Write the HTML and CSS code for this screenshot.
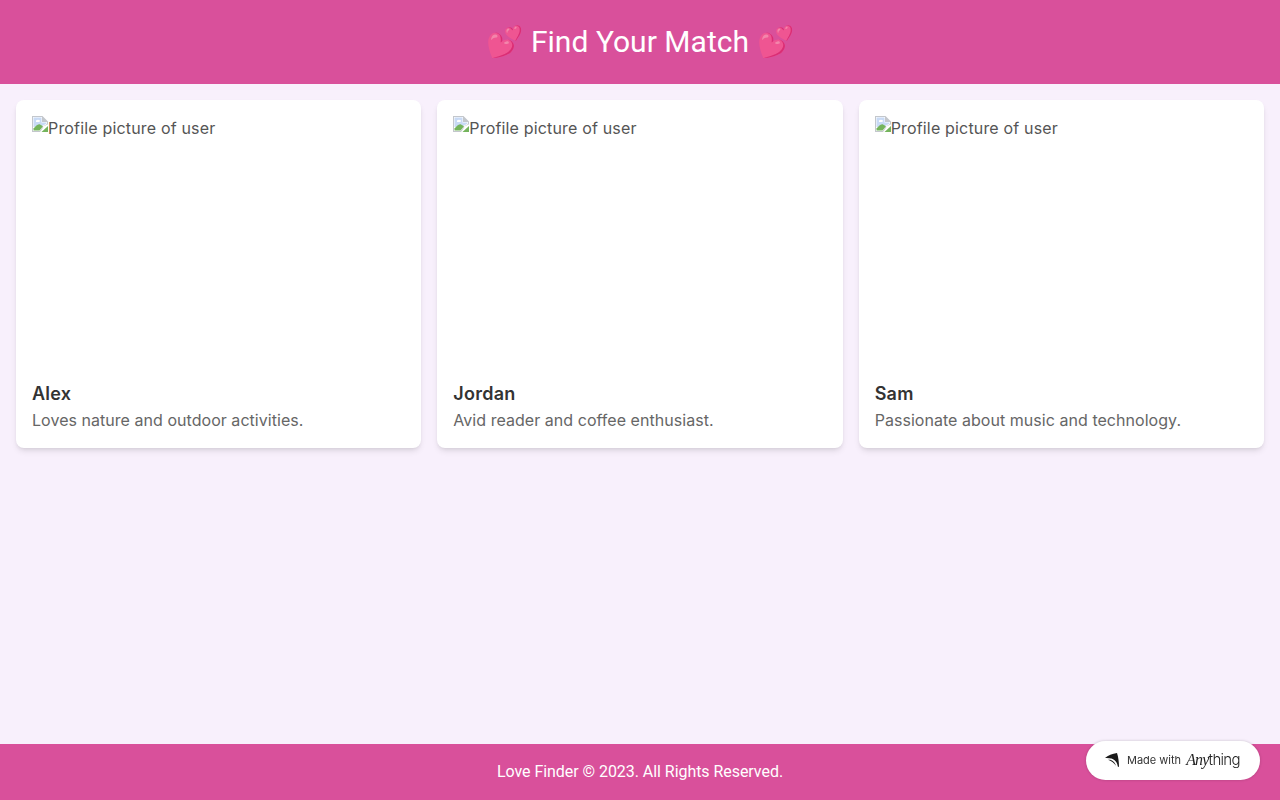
FILE: index.html
```html
<!DOCTYPE html>
<html lang="en">
<head>
<meta charset="utf-8">
<title>Love Finder</title>
<link rel="stylesheet" href="styles.css">
</head>
<body>
<div class="page">
  <header class="site-header"><h1>💕 Find Your Match 💕</h1></header>
  <main class="grid">
    <article class="card">
      <div class="photo"><svg class="broken" viewBox="0 0 16 16" width="16" height="16"><path d="M0 0H10.5L16 5.5V8.5L11.5 11 8 16H0Z" fill="#c3c7cc"/><path d="M1 1H10V6H15V8L11 10.5 7.5 15H1Z" fill="#fff"/><path d="M1.5 1.5H9.5V6.5H14.5V7.6L10.8 9.8 2 11 1.5 11Z" fill="#c8daf5"/><path d="M4 4.5C5 3.4 7 3.4 8 4.6L7.5 6H4Z" fill="#fff"/><path d="M1.5 14.5V12.5C4 9.5 6.5 8 8 8.4L11 10.3 7.5 14.5Z" fill="#74b45c"/><path d="M9.5 16 16 10V16Z" fill="#74b45c"/><path d="M11 11 16 9" stroke="#fff" stroke-width="1"/></svg><span class="alt">Profile picture of user</span></div>
      <h2>Alex</h2>
      <p>Loves nature and outdoor activities.</p>
    </article>
    <article class="card">
      <div class="photo"><svg class="broken" viewBox="0 0 16 16" width="16" height="16"><path d="M0 0H10.5L16 5.5V8.5L11.5 11 8 16H0Z" fill="#c3c7cc"/><path d="M1 1H10V6H15V8L11 10.5 7.5 15H1Z" fill="#fff"/><path d="M1.5 1.5H9.5V6.5H14.5V7.6L10.8 9.8 2 11 1.5 11Z" fill="#c8daf5"/><path d="M4 4.5C5 3.4 7 3.4 8 4.6L7.5 6H4Z" fill="#fff"/><path d="M1.5 14.5V12.5C4 9.5 6.5 8 8 8.4L11 10.3 7.5 14.5Z" fill="#74b45c"/><path d="M9.5 16 16 10V16Z" fill="#74b45c"/><path d="M11 11 16 9" stroke="#fff" stroke-width="1"/></svg><span class="alt">Profile picture of user</span></div>
      <h2>Jordan</h2>
      <p>Avid reader and coffee enthusiast.</p>
    </article>
    <article class="card">
      <div class="photo"><svg class="broken" viewBox="0 0 16 16" width="16" height="16"><path d="M0 0H10.5L16 5.5V8.5L11.5 11 8 16H0Z" fill="#c3c7cc"/><path d="M1 1H10V6H15V8L11 10.5 7.5 15H1Z" fill="#fff"/><path d="M1.5 1.5H9.5V6.5H14.5V7.6L10.8 9.8 2 11 1.5 11Z" fill="#c8daf5"/><path d="M4 4.5C5 3.4 7 3.4 8 4.6L7.5 6H4Z" fill="#fff"/><path d="M1.5 14.5V12.5C4 9.5 6.5 8 8 8.4L11 10.3 7.5 14.5Z" fill="#74b45c"/><path d="M9.5 16 16 10V16Z" fill="#74b45c"/><path d="M11 11 16 9" stroke="#fff" stroke-width="1"/></svg><span class="alt">Profile picture of user</span></div>
      <h2>Sam</h2>
      <p>Passionate about music and technology.</p>
    </article>
  </main>
  <footer class="site-footer">Love Finder © 2023. All Rights Reserved.</footer>
</div>
<a class="badge" href="#">
  <svg class="badge-logo" viewBox="0 0 14 14" width="14" height="14"><path d="M0 5C2.800 2.400 7.500.5 12 0 13.400 4 14 9 14 14L12.800 13.400C12.400 9.800 10 6.600 6.400 5.600 4.400 5 2 4.800 0 5Z" fill="#1a1a1a"/><path d="M3 6.800C6.600 6.200 9.800 8.600 11 12.800 9 9.800 6.200 7.800 3 6.800Z" fill="#1a1a1a"/></svg>
  <span class="badge-text">Made with</span>
  <span class="badge-word"><em>Any</em>thing</span>
</a>
</body>
</html>
```

FILE: styles.css
```css
* { box-sizing: border-box; }
html, body { margin: 0; height: 100%; }
body {
  background: #f8f0fc;
  font-family: Inter, "Noto Sans", sans-serif;
  font-size: 16px;
  line-height: 24px;
  color: #4b5563;
}
.page {
  min-height: 100vh;
  display: flex;
  flex-direction: column;
}
.site-header {
  background: #d9509b;
  color: #fff;
  padding: 24px;
  text-align: center;
  font-family: Roboto, sans-serif;
}
.site-header h1 {
  margin: 0;
  font-size: 30px;
  line-height: 36px;
  font-weight: 400;
  letter-spacing: .03px;
}
.grid {
  flex: 1;
  display: grid;
  grid-template-columns: repeat(3, 1fr);
  gap: 16px;
  padding: 16px;
  align-items: start;
}
.card {
  background: #fff;
  border-radius: 8px;
  padding: 16px;
  box-shadow: 0 4px 6px -1px rgba(0, 0, 0, .1), 0 2px 4px -2px rgba(0, 0, 0, .1);
}
.photo {
  height: 256px;
  margin-bottom: 8px;
  display: flex;
  align-items: flex-start;
  color: #555;
}
.broken { flex: none; }
.alt { line-height: 24px; letter-spacing: .17px; }
.card h2 {
  margin: 0;
  font-size: 18px;
  line-height: 28px;
  font-weight: 600;
  color: #333;
  letter-spacing: .25px;
}
.card p {
  margin: 0;
  color: #666;
  letter-spacing: .04px;
}
.site-footer {
  background: #d9509b;
  color: #fff;
  padding: 16px;
  text-align: center;
  font-family: Roboto, sans-serif;
  letter-spacing: -.05px;
}
.badge {
  position: fixed;
  right: 20px;
  bottom: 20px;
  width: 174px;
  height: 39px;
  display: flex;
  align-items: center;
  padding-left: 19px;
  background: #fff;
  border-radius: 20px;
  box-shadow: 0 0 3px rgba(0, 0, 0, .2);
  color: #333;
  text-decoration: none;
}
.badge-logo { flex: none; margin: 0 8px 1px 0; }
.badge-text { font-size: 11px; line-height: 14px; margin: 0 5px 2px 0; }
.badge-word {
  font-family: Inter, sans-serif;
  font-size: 15px;
  line-height: 18px;
  letter-spacing: -.7px;
  font-weight: 300;
  color: #222;
  margin-bottom: 2px;
}
.badge-word em {
  font-family: "Liberation Serif", serif;
  font-style: italic;
  font-size: 16px;
  letter-spacing: -.8px;
}
```
